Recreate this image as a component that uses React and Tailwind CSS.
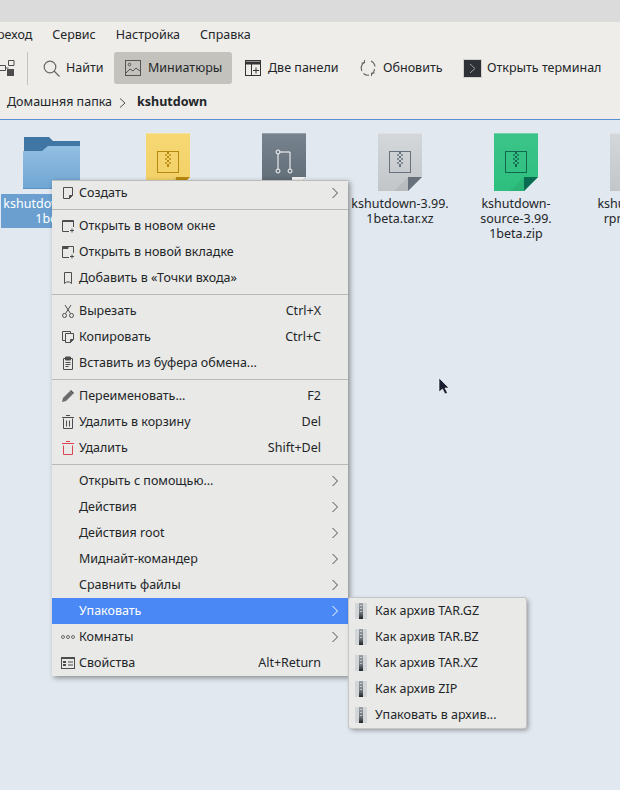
import React from 'react';

const S = ({ w = 16, h = 16, vb, className = '', children }) => (
  <svg width={w} height={h} viewBox={vb || `0 0 ${w} ${h}`} fill="none" stroke="#4d4d4d" strokeWidth="1" className={`shrink-0 ${className}`}>{children}</svg>
);

const icons = {
  create: <S><path d="M3.5 2.5h9v8l-3 3h-6z" /><path d="M12.5 10.5h-3v3z" fill="#4d4d4d" /></S>,
  newwin: <S><path d="M9 13.5H2.5v-11h11V9" /><path d="M2.5 3.5h11" /><path d="M12 10.5v4M10 12.5h4" /></S>,
  newtab: <S><path d="M9 13.5H2.5v-11h11V9" /><path d="M3 2.5h5v2H3z" fill="#4d4d4d" /><path d="M12 10.5v4M10 12.5h4" /></S>,
  bookmark: <S><path d="M4.5 2.5h7v11l-2-1.5h-3l-2 1.5z" /></S>,
  cut: <S><circle cx="4.5" cy="12.5" r="2" /><circle cx="11.5" cy="12.5" r="2" /><path d="M5.5 10.5L11 2M10.5 10.5L5 2" /></S>,
  copy: <S><path d="M5.5 4.5h8v6l-3 3h-5z" /><path d="M5 11.5H2.5v-9h8V4" /><path d="M13.5 10.5h-3v3z" fill="#4d4d4d" /></S>,
  paste: <S><path d="M5 3.5H3.5v11h9v-11H11" /><path d="M5.5 2h5v3h-5z" fill="#4d4d4d" /><path d="M5.5 7.5h5M5.5 9.5h5M5.5 11.5h3" /></S>,
  rename: <S><path d="M2 14l1-4 7-7 3 3-7 7z" fill="#6b6b6b" stroke="none" /><path d="M11 2l3 3-1 1-3-3z" fill="#4d4d4d" stroke="none" /></S>,
  trash: <S><path d="M3.5 4.5v10h9v-10" /><path d="M2 3.5h12M6 1.5h4" /><path d="M6.5 6.5v6M9.5 6.5v6" /></S>,
  del: <S><g stroke="#da4453"><path d="M3.5 5.5v9h9v-9" /><path d="M2 3.5h12M6 1.5h4" /></g></S>,
  rooms: <S><circle cx="3" cy="8" r="1.5" fill="none" stroke="#6b6b6b" /><circle cx="8" cy="8" r="1.5" fill="none" stroke="#6b6b6b" /><circle cx="13" cy="8" r="1.5" fill="none" stroke="#6b6b6b" /></S>,
  props: <S><rect x="1.5" y="2.5" width="13" height="11" /><path d="M1.5 3.5h13" /><rect x="3" y="6" width="3" height="2" fill="#4d4d4d" stroke="none" /><rect x="3" y="9" width="3" height="2" fill="#4d4d4d" stroke="none" /><path d="M8 7h5M8 10h5" /></S>,
};

const Chevron = ({ light }) => (
  <svg width="8" height="12" viewBox="0 0 8 12" fill="none" stroke={light ? '#ffffff' : '#4d4d4d'} strokeWidth="1" className="shrink-0"><path d="M1.5 1l5 5-5 5" /></svg>
);

const groups = [
  [{ t: 'Создать', i: 'create', sub: 1 }],
  [{ t: 'Открыть в новом окне', i: 'newwin' }, { t: 'Открыть в новой вкладке', i: 'newtab' }, { t: 'Добавить в «Точки входа»', i: 'bookmark' }],
  [{ t: 'Вырезать', i: 'cut', k: 'Ctrl+X' }, { t: 'Копировать', i: 'copy', k: 'Ctrl+C' }, { t: 'Вставить из буфера обмена...', i: 'paste' }],
  [{ t: 'Переименовать...', i: 'rename', k: 'F2' }, { t: 'Удалить в корзину', i: 'trash', k: 'Del' }, { t: 'Удалить', i: 'del', k: 'Shift+Del' }],
  [
    { t: 'Открыть с помощью...', sub: 1 }, { t: 'Действия', sub: 1 }, { t: 'Действия root', sub: 1 }, { t: 'Миднайт-командер', sub: 1 },
    { t: 'Сравнить файлы', sub: 1 }, { t: 'Упаковать', sub: 1, active: 1 }, { t: 'Комнаты', i: 'rooms', sub: 1 }, { t: 'Свойства', i: 'props', k: 'Alt+Return' },
  ],
];

const MenuRow = ({ t, i, k, sub, active }) => (
  <div className={`h-[26px] flex items-center pl-[8px] ${active ? 'bg-[#4a88f5] text-white' : ''}`}>
    <div className="w-[16px] h-[16px] mr-[3px] flex items-center justify-center">{i && icons[i]}</div>
    <span className="flex-1 whitespace-nowrap">{t}</span>
    {k && <span className="mr-[27px]">{k}</span>}
    {sub && <div className="mr-[9px] flex"><Chevron light={active} /></div>}
  </div>
);

const ArchiveIcon = ({ id }) => (
  <svg width="12" height="16" viewBox="0 0 12 16" className="shrink-0">
    <defs>
      <linearGradient id={id} x1="0" y1="0" x2="0" y2="1"><stop offset="0" stopColor="#9aa0a5" /><stop offset=".6" stopColor="#6f767c" /><stop offset="1" stopColor="#1f2326" /></linearGradient>
    </defs>
    <rect width="12" height="16" fill="#d3d6d8" />
    <rect x="4" width="4" height="16" fill={`url(#${id})`} />
    <path d="M5 2h2v1H5zM5 5h2v1H5zM5 8h2v1H5z" fill="#dfe1e3" opacity=".7" />
  </svg>
);

const Doc = ({ id, top, bottom, fold, children }) => (
  <svg width="44" height="58" viewBox="0 0 44 58" className="block">
    <defs>
      <linearGradient id={id} x1="0" y1="0" x2="0" y2="1"><stop offset="0" stopColor={top} /><stop offset="1" stopColor={bottom} /></linearGradient>
    </defs>
    <path d="M0 0h44v44L30 58H0z" fill={`url(#${id})`} />
    <path d="M0 0h44v1H0z" fill="#ffffff" opacity=".25" />
    <path d="M30 58L16 58L30 44z" fill="#000" opacity=".06" />
    <path d="M30 44h14L30 58z" fill={fold} />
    {children}
  </svg>
);

const Zip = ({ c }) => (
  <g fill="none" stroke={c}>
    <rect x="11.5" y="18.5" width="21" height="21" />
    <path d="M21 19h2v2h-2zM21 23h2v2h-2zM21 27h2v2h-2zM21 31h2v3h-2z" fill={c} stroke="none" />
    <path d="M23 21h2v2h-2zM23 25h2v2h-2zM23 29h2v2h-2zM19 21h2v2h-2zM19 25h2v2h-2zM19 29h2v2h-2z" fill={c} stroke="none" opacity=".7" />
  </g>
);

const FolderIcon = () => (
  <svg width="58" height="52" viewBox="0 0 58 52" className="block mb-[2px]">
    <defs><linearGradient id="fo" x1="0" y1="0" x2="0" y2="1"><stop offset="0" stopColor="#93bfe3" /><stop offset="1" stopColor="#6fa5d3" /></linearGradient></defs>
    <path d="M1 0h25l4 4h27v12H1z" fill="#3f76a3" />
    <path d="M0 14h19l6-5h32v43H0z" fill="url(#fo)" />
    <path d="M0 51h57v1H0z" fill="#5b93c3" />
  </svg>
);

const FileItem = ({ icon, lines, selected }) => (
  <div className="w-[116px] shrink-0 flex flex-col items-center">
    <div className="h-[58px] flex items-end justify-center">{icon}</div>
    <div className={`w-[102px] mt-[3px] py-[2px] text-center leading-[15px] ${selected ? 'bg-[#6a9fd0] text-white' : ''}`}>
      {lines.map((l) => <div key={l} className="whitespace-nowrap">{l}</div>)}
    </div>
  </div>
);

const TbIcon = {
  find: <S w={17} h={17}><circle cx="7" cy="7" r="5.8" stroke="#666" strokeWidth="1.2" /><path d="M11 11l5.5 5.5" stroke="#666" strokeWidth="1.2" /></S>,
  thumbs: <S w={16} h={16}><rect x=".5" y=".5" width="15" height="15" stroke="#555" /><circle cx="4.5" cy="4.5" r="1.3" stroke="#555" /><path d="M1 13l4-4 3 2 3-3 4 3" stroke="#555" /></S>,
  panels: <S w={16} h={16}><rect x=".5" y=".5" width="15" height="15" stroke="#333" /><path d="M1 3h14" stroke="#333" strokeWidth="3" /><path d="M6.5 4v11.5M11 7.5v6M8 10.5h6" stroke="#333" /></S>,
  reload: <S w={16} h={16}><path d="M2 11A7 7 0 0 1 4.5 2M11 1A7 7 0 0 1 15 6.5M14.5 9a7 7 0 0 1-2.5 5M9 15.2A7 7 0 0 1 3.5 13.5" stroke="#666" strokeWidth="1.2" /><path d="M4.5 0v3H1.5M11.5 16v-3h3" stroke="#666" /></S>,
};

const Tool = ({ icon, label, active, className = '' }) => (
  <div className={`h-[32px] flex items-center ${active ? 'bg-[#c3c2bd] rounded-[3px]' : ''} ${className}`}>
    {icon}
    <span className="whitespace-nowrap">{label}</span>
  </div>
);

export default function App() {
  return (
    <div className="relative w-[620px] h-[790px] overflow-hidden bg-[#e1e8ef] text-[12.5px] text-[#232629] flex flex-col" style={{ fontFamily: '"Noto Sans", sans-serif' }}>
      <div className="h-[22px] bg-[#dbdbdb]" />

      <div className="bg-[#eeede9] border-b border-[#5a8fd3] h-[98px] flex flex-col">
        <div className="h-[26px] flex items-center gap-[20px] ml-[-3px]">
          <span>реход</span><span>Сервис</span><span>Настройка</span><span>Справка</span>
        </div>
        <div className="h-[32px] flex items-center mt-[4px]">
          <svg width="15" height="16" viewBox="0 0 15 16" className="shrink-0" fill="none" stroke="#4d4d4d">
            <path d="M0 5.5h5.5v5H0M8.5 .5h5.5v5H8.5zM5.5 8h3" />
            <rect x="7" y="9" width="7" height="7" fill="#4d4d4d" stroke="none" />
          </svg>
          <div className="w-px h-[33px] bg-[#c4c3bf] ml-[12px] mr-[15px]" />
          <Tool icon={<span className="mr-[6px] flex">{TbIcon.find}</span>} label="Найти" className="w-[71px]" />
          <Tool icon={<span className="mr-[7px] flex">{TbIcon.thumbs}</span>} label="Миниатюры" active className="w-[118px] pl-[11px]" />
          <Tool icon={<span className="mr-[7px] flex">{TbIcon.panels}</span>} label="Две панели" className="ml-[13px] w-[115px]" />
          <Tool icon={<span className="mr-[7px] flex">{TbIcon.reload}</span>} label="Обновить" className="w-[104px]" />
          <Tool
            icon={<div className="w-[19px] h-[19px] mr-[5px] ml-[-1px] bg-[#2e3135] border border-[#d0d0ce] flex items-center justify-center"><svg width="7" height="11" viewBox="0 0 7 11" fill="none" stroke="#9a9da0"><path d="M1 1l5 4.5L1 10" /></svg></div>}
            label="Открыть терминал"
          />
        </div>
        <div className="flex-1 flex items-center pl-[7px] pt-[2px]">
          <span>Домашняя папка</span>
          <svg width="8" height="10" viewBox="0 0 8 10" fill="none" stroke="#4d4d4d" className="ml-[7px] mr-[10px]"><path d="M1 .5L6 5 1 9.5" /></svg>
          <span className="font-bold">kshutdown</span>
        </div>
      </div>

      <div className="flex-1 flex pt-[13px] ml-[-6px] items-start">
        <FileItem selected icon={<FolderIcon />} lines={['kshutdown-3.99.', '1beta']} />
        <FileItem icon={<Doc id="d1" top="#f6d873" bottom="#f3cf65" fold="#b8890f"><Zip c="#b8890f" /></Doc>} lines={['kshutdown-3.99.', '1beta.tar.bz2']} />
        <FileItem
          icon={
            <Doc id="d2" top="#77838e" bottom="#5d6973" fold="#f2f2f2">
              <g fill="none" stroke="#fff"><path d="M16 21v15M28 36V19H18" /><circle cx="16" cy="38" r="2" /><circle cx="28" cy="38" r="2" /><circle cx="16" cy="19" r="2" /></g>
            </Doc>
          }
          lines={['kshutdown-3.99.', '1beta.patch']}
        />
        <FileItem icon={<Doc id="d3" top="#d5d8da" bottom="#c2c6c9" fold="#66717c"><Zip c="#66717c" /></Doc>} lines={['kshutdown-3.99.', '1beta.tar.xz']} />
        <FileItem icon={<Doc id="d4" top="#3cc489" bottom="#2dbf7e" fold="#0b6b50"><Zip c="#13664f" /></Doc>} lines={['kshutdown-', 'source-3.99.', '1beta.zip']} />
        <FileItem icon={<Doc id="d5" top="#d5d8da" bottom="#c2c6c9" fold="#66717c"><Zip c="#66717c" /></Doc>} lines={['kshutdown-', 'rpm-3.99.']} />
      </div>

      <div className="absolute left-[52px] top-[180px] w-[296px] bg-[#e9e9e7] border-t border-[#bcbcba] shadow-[2px_2px_5px_rgba(0,0,0,0.4)]">
        {groups.map((g, n) => (
          <div key={n} className={n === 0 ? 'mt-[-1px]' : ''}>
            {n > 0 && <div className="h-px bg-[#b9b9b7] my-[3px]" />}
            {g.map((r) => <MenuRow key={r.t} {...r} />)}
          </div>
        ))}
      </div>

      <div className="absolute left-[349px] top-[598px] w-[177px] bg-[#e9e9e7] rounded-[2px] shadow-[0_0_0_1px_#c6c6c4,2px_2px_5px_rgba(0,0,0,0.4)]">
        {['Как архив TAR.GZ', 'Как архив TAR.BZ', 'Как архив TAR.XZ', 'Как архив ZIP', 'Упаковать в архив...'].map((t, i) => (
          <div key={t} className="h-[26px] flex items-center pl-[6px] gap-[8px]">
            <ArchiveIcon id={`ar${i}`} />
            <span className="whitespace-nowrap">{t}</span>
          </div>
        ))}
      </div>

      <svg width="12" height="18" viewBox="0 0 12 18" className="absolute left-[438px] top-[377px]">
        <path d="M1 1v14l3.5-3 2.5 5 2.5-1-2.5-5H11z" fill="#1b1d30" stroke="#ffffff" strokeWidth=".6" />
      </svg>
    </div>
  );
}
